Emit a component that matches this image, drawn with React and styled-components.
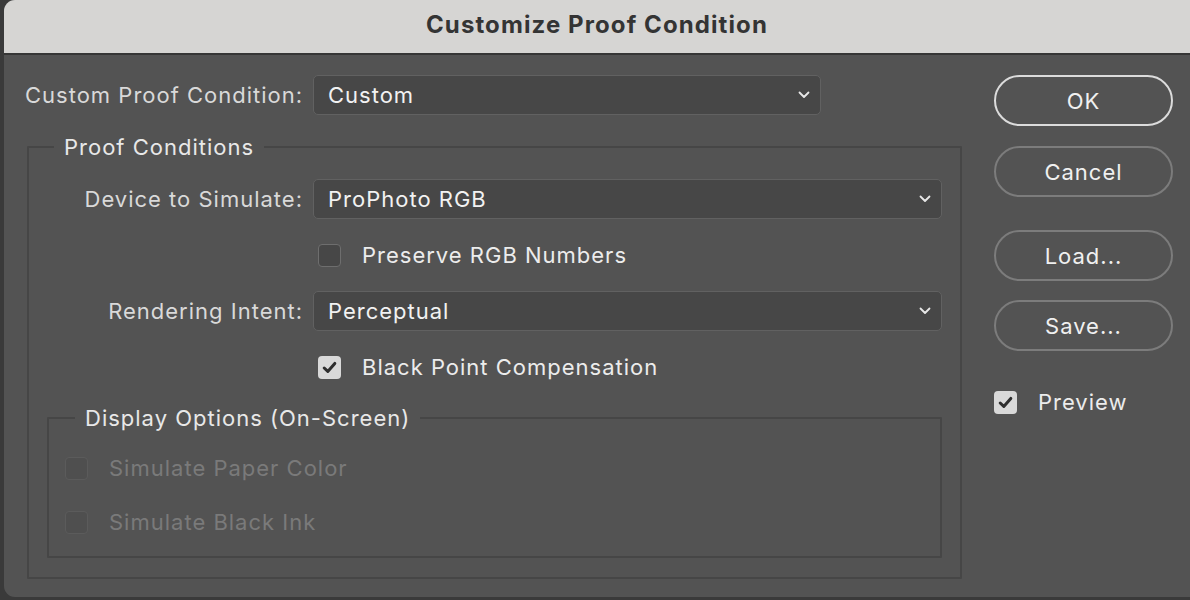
import React from 'react'
import styled, { createGlobalStyle } from 'styled-components'

const Global = createGlobalStyle`
  html, body {
    margin: 0;
    padding: 0;
    background: #3a3a3a;
    font-family: Inter, "Noto Sans", sans-serif;
  }
`

const Screen = styled.div`
  width: 1190px;
  height: 600px;
  display: flex;
  padding-left: 4px;
  box-sizing: border-box;
  overflow: hidden;
`

const Dialog = styled.div`
  flex: 1;
  height: 597px;
  background: #535353;
  border-radius: 11px 0 0 11px;
  overflow: hidden;
  display: flex;
  flex-direction: column;
`

const TitleBar = styled.div`
  height: 55px;
  box-sizing: border-box;
  padding-bottom: 4px;
  flex: none;
  background: #d6d5d3;
  border-bottom: 2px solid #363636;
  display: flex;
  align-items: center;
  justify-content: center;
  font-size: 24px;
  font-weight: 700;
  color: #343434;
  letter-spacing: 1.1px;
`

const Body = styled.div`
  flex: 1;
  display: flex;
  padding: 20px 17px 0 21px;
  font-size: 22px;
  letter-spacing: 1px;
`

const Main = styled.div`
  width: 937px;
  display: flex;
  flex-direction: column;
`

const Side = styled.div`
  margin-left: 32px;
  width: 179px;
  display: flex;
  flex-direction: column;
`

const TopRow = styled.div`
  display: flex;
  align-items: center;
  gap: 13px;
`

const Label = styled.div`
  color: #d9d9d9;
  white-space: nowrap;
  text-align: right;
  width: ${p => p.width || 'auto'};
`

const SelectBox = styled.div`
  box-sizing: border-box;
  height: 40px;
  width: ${p => p.width || '100%'};
  background: #474747;
  border: 1.5px solid #616161;
  border-radius: 5px;
  display: flex;
  align-items: center;
  justify-content: space-between;
  padding: 0 10px 0 14px;
  color: #f2f2f2;
`

const Chevron = () => (
  <svg width="12" height="8" viewBox="0 0 12 8">
    <path d="M1.5 1.5 L6 6 L10.5 1.5" fill="none" stroke="#e8e8e8" strokeWidth="1.8" strokeLinecap="round" strokeLinejoin="round" />
  </svg>
)

const Select = ({ value, width }) => (
  <SelectBox width={width}>
    <span>{value}</span>
    <Chevron />
  </SelectBox>
)

const Group = styled.fieldset`
  margin: ${p => p.inner ? '18px 0 19px 18px' : '19px 0 0 2px'};
  padding: ${p => p.inner ? '22px 0 19px 16px' : '17px 18px 0 0'};
  border: 2px solid #464646;
  border-radius: 1px;
  min-width: 0;
  box-sizing: border-box;
`

const Legend = styled.legend`
  margin-left: ${p => p.inner ? '10px' : '25px'};
  padding: 0 10px;
  color: #e8e8e8;
  line-height: 26px;
  margin-bottom: ${p => p.inner ? '0' : '2px'};
`

const Grid = styled.div`
  display: grid;
  grid-template-columns: 274px 1fr;
  column-gap: 10px;
  row-gap: 16px;
  align-items: center;
`

const Cell = styled.div`
  grid-column: 2;
  height: 40px;
  display: flex;
  align-items: center;
  padding-left: 5px;
`

const CheckRow = styled.div`
  display: flex;
  align-items: center;
  gap: 21px;
  height: ${p => p.h || '40px'};
  color: ${p => p.disabled ? '#7a7a7a' : '#ececec'};
`

const Box = styled.span`
  box-sizing: border-box;
  width: 23px;
  height: 23px;
  border-radius: 4px;
  display: inline-flex;
  align-items: center;
  justify-content: center;
  flex: none;
  background: ${p => p.checked ? '#d9d9d9' : p.disabled ? '#4f4f4f' : '#474747'};
  border: ${p => p.checked ? 'none' : p.disabled ? '1.5px solid #5b5b5b' : '1.5px solid #6e6e6e'};
`

const Spacer = styled.div`
  height: ${p => p.h};
`

const Check = ({ checked, disabled, children, h }) => (
  <CheckRow disabled={disabled} h={h}>
    <Box checked={checked} disabled={disabled}>
      {checked && (
        <svg width="15" height="13" viewBox="0 0 15 13">
          <path d="M2.2 7 L5.8 10.4 L12.8 2.4" fill="none" stroke="#2e2e2e" strokeWidth="3" strokeLinecap="round" strokeLinejoin="round" />
        </svg>
      )}
    </Box>
    <span>{children}</span>
  </CheckRow>
)

const Button = styled.div`
  box-sizing: border-box;
  height: 51px;
  border-radius: 26px;
  border: 2px solid ${p => p.primary ? '#dcdcdc' : '#7c7c7c'};
  display: flex;
  align-items: center;
  justify-content: center;
  color: #f0f0f0;
  margin-top: ${p => p.mt || '0'};
`

const PreviewRow = styled.div`
  margin-top: 31px;
`

export default function App() {
  return (
    <>
      <Global />
      <Screen>
        <Dialog>
          <TitleBar>Customize Proof Condition</TitleBar>
          <Body>
            <Main>
              <TopRow>
                <Label width="275px">Custom Proof Condition:</Label>
                <Select value="Custom" width="508px" />
              </TopRow>
              <Group>
                <Legend>Proof Conditions</Legend>
                <Grid>
                  <Label>Device to Simulate:</Label>
                  <Select value="ProPhoto RGB" />
                  <Cell>
                    <Check>Preserve RGB Numbers</Check>
                  </Cell>
                  <Label>Rendering Intent:</Label>
                  <Select value="Perceptual" />
                  <Cell>
                    <Check checked>Black Point Compensation</Check>
                  </Cell>
                </Grid>
                <Group inner>
                  <Legend inner>Display Options (On-Screen)</Legend>
                  <Check disabled h="30px">Simulate Paper Color</Check>
                  <Spacer h="24px" />
                  <Check disabled h="30px">Simulate Black Ink</Check>
                </Group>
              </Group>
            </Main>
            <Side>
              <Button primary>OK</Button>
              <Button mt="20px">Cancel</Button>
              <Button mt="33px">Load...</Button>
              <Button mt="19px">Save...</Button>
              <PreviewRow>
                <Check checked>Preview</Check>
              </PreviewRow>
            </Side>
          </Body>
        </Dialog>
      </Screen>
    </>
  )
}
